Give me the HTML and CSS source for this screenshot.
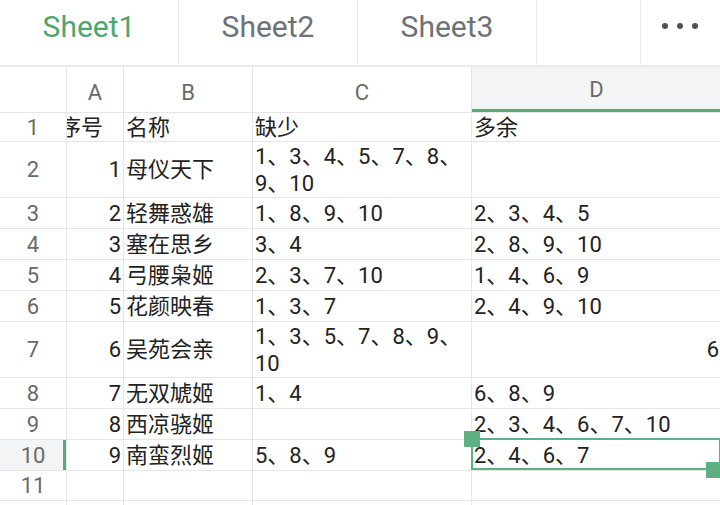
FILE: index.html
```html
<!DOCTYPE html>
<html lang="zh-CN">
<head>
  <meta charset="UTF-8">
  <meta name="viewport" content="width=device-width, initial-scale=1.0">
  <title>Sheet1</title>
  <link rel="stylesheet" href="styles.css">
</head>
<body>
  <div class="tabs">
    <div class="tab active">Sheet1</div>
    <div class="tab">Sheet2</div>
    <div class="tab">Sheet3</div>
    <div class="tab-space"></div>
    <div class="tab-more"><span></span><span></span><span></span></div>
  </div>

  <div class="sheet">
    <div class="grid">
      <!-- column headers -->
      <div class="cell corner"></div>
      <div class="cell col-head">A</div>
      <div class="cell col-head">B</div>
      <div class="cell col-head">C</div>
      <div class="cell col-head selected">D</div>

      <div class="cell row-head">1</div>
      <div class="cell"><span class="overflow-left">序号</span></div>
      <div class="cell">名称</div>
      <div class="cell">缺少</div>
      <div class="cell">多余</div>

      <div class="cell row-head">2</div>
      <div class="cell num">1</div>
      <div class="cell">母仪天下</div>
      <div class="cell">1、3、4、5、7、8、9、10</div>
      <div class="cell"></div>

      <div class="cell row-head">3</div>
      <div class="cell num">2</div>
      <div class="cell">轻舞惑雄</div>
      <div class="cell">1、8、9、10</div>
      <div class="cell">2、3、4、5</div>

      <div class="cell row-head">4</div>
      <div class="cell num">3</div>
      <div class="cell">塞在思乡</div>
      <div class="cell">3、4</div>
      <div class="cell">2、8、9、10</div>

      <div class="cell row-head">5</div>
      <div class="cell num">4</div>
      <div class="cell">弓腰枭姬</div>
      <div class="cell">2、3、7、10</div>
      <div class="cell">1、4、6、9</div>

      <div class="cell row-head">6</div>
      <div class="cell num">5</div>
      <div class="cell">花颜映春</div>
      <div class="cell">1、3、7</div>
      <div class="cell">2、4、9、10</div>

      <div class="cell row-head">7</div>
      <div class="cell num">6</div>
      <div class="cell">吴苑会亲</div>
      <div class="cell">1、3、5、7、8、9、10</div>
      <div class="cell num">6</div>

      <div class="cell row-head">8</div>
      <div class="cell num">7</div>
      <div class="cell">无双虓姬</div>
      <div class="cell">1、4</div>
      <div class="cell">6、8、9</div>

      <div class="cell row-head">9</div>
      <div class="cell num">8</div>
      <div class="cell">西凉骁姬</div>
      <div class="cell"></div>
      <div class="cell">2、3、4、6、7、10</div>

      <div class="cell row-head current">10</div>
      <div class="cell num">9</div>
      <div class="cell">南蛮烈姬</div>
      <div class="cell">5、8、9</div>
      <div class="cell">2、4、6、7</div>

      <div class="cell row-head">11</div>
      <div class="cell"></div>
      <div class="cell"></div>
      <div class="cell"></div>
      <div class="cell"></div>

      <div class="cell row-head">12</div>
      <div class="cell"></div>
      <div class="cell"></div>
      <div class="cell"></div>
      <div class="cell"></div>
    </div>

    <!-- active cell D10 -->
    <div class="selection">
      <span class="handle handle-start"></span>
      <span class="handle handle-end"></span>
    </div>
  </div>
</body>
</html>
```

FILE: styles.css
```css
html, body {
  margin: 0;
  padding: 0;
  height: 100%;
  overflow: hidden;
  background: #fff;
}

body {
  font-family: Roboto, "Noto Sans CJK SC", sans-serif;
  color: #222;
}

/* sheet tabs */
.tabs {
  display: flex;
  height: 65px;
  border-bottom: 2px solid #ebebeb;
}

.tab {
  width: 178px;
  border-right: 1px solid #e8e8e8;
  display: flex;
  align-items: center;
  justify-content: center;
  padding-bottom: 13px;
  font-size: 30px;
  color: #6d7178;
}

.tab.active {
  color: #4aa86e;
}

.tab-space {
  width: 103px;
  border-right: 1px solid #e8e8e8;
}

.tab-more {
  flex: 1;
  display: flex;
  align-items: center;
  justify-content: center;
  gap: 9px;
  padding-bottom: 13px;
  padding-right: 2px;
}

.tab-more span {
  width: 6px;
  height: 6px;
  border-radius: 50%;
  background: #505050;
}

/* grid */
.sheet {
  position: relative;
}

.grid {
  display: grid;
  grid-template-columns: 66px 56px 128px 218px 249px;
  grid-template-rows: 45px 28px 55px 30px 30px 30px 30px 55px 30px 30px 30px 29px 30px;
  gap: 1px;
  background: #e6e6e6;
  font-size: 22px;
  line-height: 27px;
}

.cell {
  background: #fff;
  padding: 0 2px;
  display: flex;
  align-items: center;
  overflow: hidden;
  white-space: normal;
}

.cell.num {
  justify-content: flex-end;
}

.overflow-left {
  margin-left: -10px;
  white-space: nowrap;
}

.col-head,
.row-head {
  justify-content: center;
  color: #6a6a6a;
}

.col-head {
  padding-top: 5px;
}

.col-head.selected {
  background: #f3f4f6;
  border-bottom: 3px solid #55ac79;
  padding-top: 2px;
}

.row-head.current {
  background: #f3f4f6;
  position: relative;
}

.row-head.current::after {
  content: "";
  position: absolute;
  right: 0;
  top: 0;
  bottom: 0;
  width: 3px;
  background: #55ac79;
}

/* active cell frame */
.selection {
  position: absolute;
  left: 471px;
  top: 371px;
  width: 250px;
  height: 32px;
  border: 2px solid #5cb081;
  box-sizing: border-box;
}

.handle {
  position: absolute;
  width: 16px;
  height: 16px;
  background: #5cb081;
}

.handle-start {
  left: -9px;
  top: -9px;
}

.handle-end {
  right: -3px;
  bottom: -10px;
}
```
